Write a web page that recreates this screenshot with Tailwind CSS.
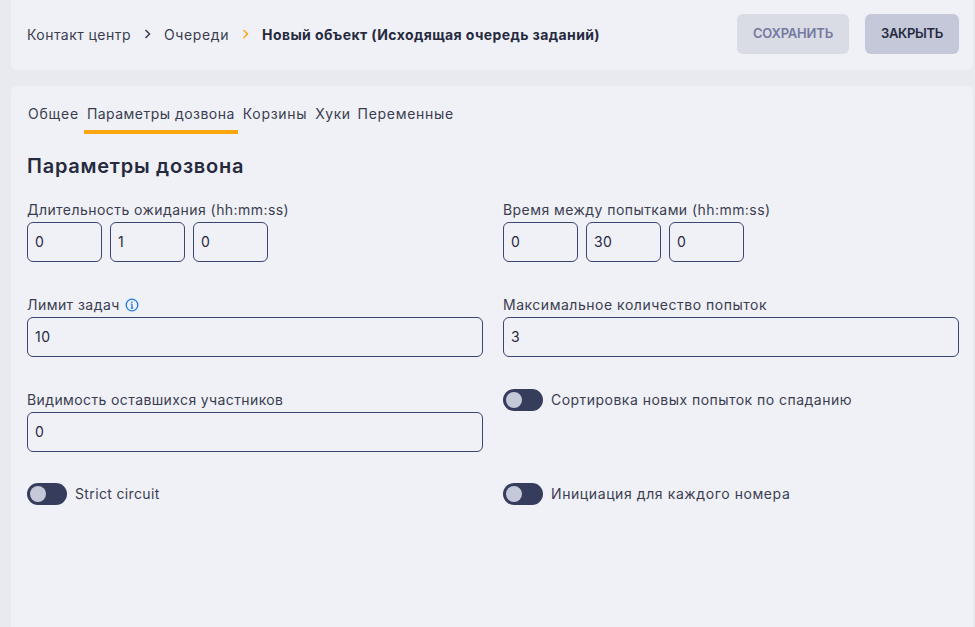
<!DOCTYPE html>
<html lang="ru">
<head>
    <meta charset="UTF-8">
    <meta name="viewport" content="width=device-width, initial-scale=1.0">
    <title>Новый объект</title>
    <script src="https://cdn.jsdelivr.net/npm/@tailwindcss/browser@4"></script>
</head>
<body class="bg-[#e9eaef] h-screen overflow-hidden font-[Inter,sans-serif] text-[14px] text-[#3a3d50] pl-[11px] pr-[2px] flex flex-col gap-4">
    <header class="h-[70px] shrink-0 bg-[#f0f1f6] rounded-b-md pl-4 pr-[14px] pb-[2px] flex items-center justify-between">
        <nav class="flex items-center">
            <span class="tracking-[0.45px]">Контакт центр</span>
            <svg class="mx-[13px]" width="7" height="10" viewBox="0 0 7 10" fill="none" stroke="#3a3d50" stroke-width="1.5"><path d="M1.5 1l4 4-4 4"/></svg>
            <span class="tracking-[0.63px]">Очереди</span>
            <svg class="mx-[13px]" width="7" height="10" viewBox="0 0 7 10" fill="none" stroke="#fca60f" stroke-width="1.5"><path d="M1.5 1l4 4-4 4"/></svg>
            <span class="font-bold text-[#262a3f] tracking-[0.4px]">Новый объект (Исходящая очередь заданий)</span>
        </nav>
        <div class="flex gap-4">
            <button class="w-[112px] h-10 rounded-md bg-[#d9dbe5] text-[#7579a0] text-[13px] font-semibold uppercase tracking-[-0.2px]">Сохранить</button>
            <button class="w-[94px] h-10 rounded-md bg-[#c5c8d8] text-[#262a3f] text-[13px] font-semibold uppercase tracking-[-0.3px]">Закрыть</button>
        </div>
    </header>

    <main class="flex-1 bg-[#f0f1f6] rounded-t-md pl-4 pr-[14px] pt-4">
        <div class="flex gap-[2px] -ml-[2px]">
            <a class="px-[3px] pb-1 border-b-4 border-transparent leading-6 tracking-[0.8px]">Общее</a>
            <a class="px-[3px] pb-1 border-b-4 border-[#fca60f] leading-6 tracking-[0.47px]">Параметры дозвона</a>
            <a class="px-[3px] pb-1 border-b-4 border-transparent leading-6 tracking-[0.7px]">Корзины</a>
            <a class="px-[3px] pb-1 border-b-4 border-transparent leading-6 tracking-[0.5px]">Хуки</a>
            <a class="-ml-px px-[3px] pb-1 border-b-4 border-transparent leading-6 tracking-[0.7px]">Переменные</a>
        </div>
        <h2 class="mt-[18px] text-[20px] leading-7 font-semibold text-[#262a3f] tracking-[0.75px]">Параметры дозвона</h2>

        <div class="mt-[18px] grid grid-cols-2 gap-x-5 auto-rows-[95px]">
            <div>
                <label class="block leading-6 tracking-[0.44px]">Длительность ожидания (hh:mm:ss)</label>
                <div class="flex gap-2">
                    <input value="0" class="w-[75px] h-10 pl-[7px] pr-2 pb-[2px] text-[#262a3f] tracking-[0.45px] border border-[#3a4570] rounded-md outline-none">
                    <input value="1" class="w-[75px] h-10 pl-[7px] pr-2 pb-[2px] text-[#262a3f] tracking-[0.45px] border border-[#3a4570] rounded-md outline-none">
                    <input value="0" class="w-[75px] h-10 pl-[7px] pr-2 pb-[2px] text-[#262a3f] tracking-[0.45px] border border-[#3a4570] rounded-md outline-none">
                </div>
            </div>
            <div>
                <label class="block leading-6 tracking-[0.44px]">Время между попытками (hh:mm:ss)</label>
                <div class="flex gap-2">
                    <input value="0" class="w-[75px] h-10 pl-[7px] pr-2 pb-[2px] text-[#262a3f] tracking-[0.45px] border border-[#3a4570] rounded-md outline-none">
                    <input value="30" class="w-[75px] h-10 pl-[7px] pr-2 pb-[2px] text-[#262a3f] tracking-[0.45px] border border-[#3a4570] rounded-md outline-none">
                    <input value="0" class="w-[75px] h-10 pl-[7px] pr-2 pb-[2px] text-[#262a3f] tracking-[0.45px] border border-[#3a4570] rounded-md outline-none">
                </div>
            </div>
            <div>
                <label class="flex items-center gap-[5px] leading-6 tracking-[0.45px]">Лимит задач
                    <svg width="14" height="14" viewBox="0 0 14 14" fill="none" stroke="#1f7ae0" stroke-width="1.3"><circle cx="7" cy="7" r="5.8"/><path d="M7 6.2v4M5.8 10.2h2.4M5.8 6.2H7"/><path d="M7 3.6v1.3"/></svg>
                </label>
                <input value="10" class="w-full h-10 pl-[7px] pr-2 pb-[2px] text-[#262a3f] tracking-[0.45px] border border-[#3a4570] rounded-md outline-none">
            </div>
            <div>
                <label class="block leading-6 tracking-[0.52px]">Максимальное количество попыток</label>
                <input value="3" class="w-full h-10 pl-[7px] pr-2 pb-[2px] text-[#262a3f] tracking-[0.45px] border border-[#3a4570] rounded-md outline-none">
            </div>
            <div>
                <label class="block leading-6 tracking-[0.39px]">Видимость оставшихся участников</label>
                <input value="0" class="w-full h-10 pl-[7px] pr-2 pb-[2px] text-[#262a3f] tracking-[0.45px] border border-[#3a4570] rounded-md outline-none">
            </div>
            <div class="pt-px flex items-start gap-2">
                <span class="w-10 h-[22px] rounded-full bg-[#363c5b] flex items-center pl-[3px]"><span class="w-4 h-4 rounded-full bg-[#c5c8d8]"></span></span>
                <span class="leading-[22px] tracking-[0.47px]">Сортировка новых попыток по спаданию</span>
            </div>
            <div class="flex items-start gap-2">
                <span class="w-10 h-[22px] rounded-full bg-[#363c5b] flex items-center pl-[3px]"><span class="w-4 h-4 rounded-full bg-[#c5c8d8]"></span></span>
                <span class="leading-[22px] tracking-[0.36px]">Strict circuit</span>
            </div>
            <div class="flex items-start gap-2">
                <span class="w-10 h-[22px] rounded-full bg-[#363c5b] flex items-center pl-[3px]"><span class="w-4 h-4 rounded-full bg-[#c5c8d8]"></span></span>
                <span class="leading-[22px] tracking-[0.59px]">Инициация для каждого номера</span>
            </div>
        </div>
    </main>
</body>
</html>
